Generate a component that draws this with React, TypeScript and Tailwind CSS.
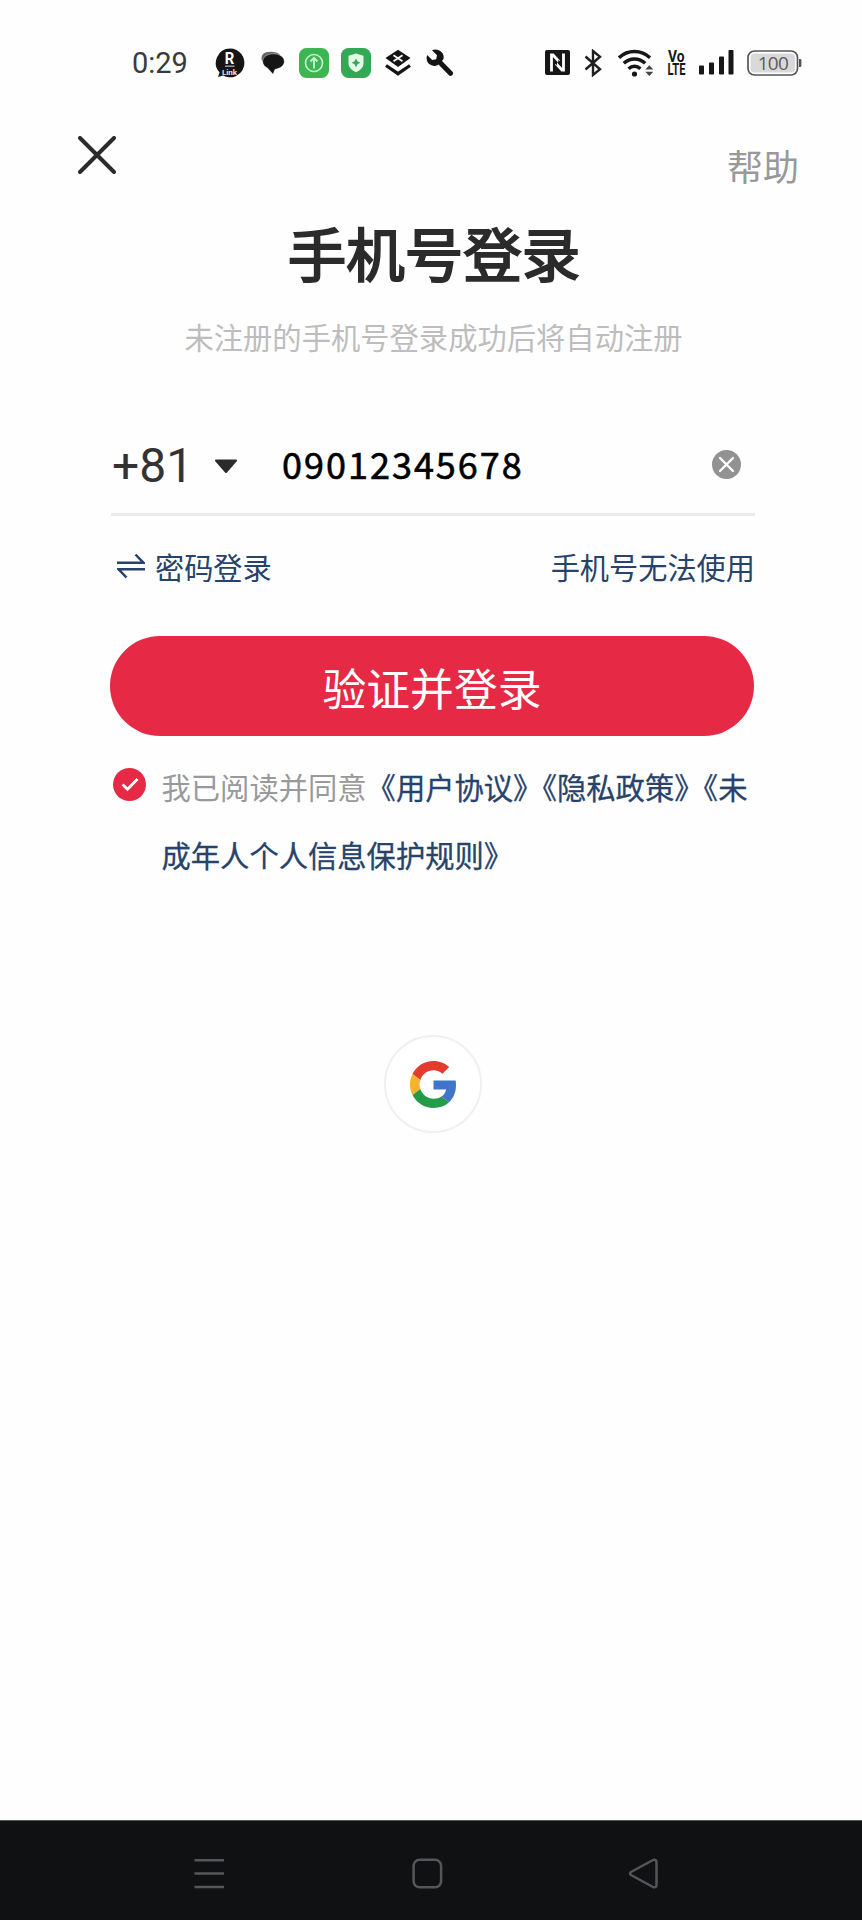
import React from "react";

const CJK = "font-['Noto_Sans_CJK_SC',sans-serif]";

function LinkBubbleIcon() {
  return (
    <svg className="h-[30px] w-[30px]" viewBox="0 0 30 30">
      <path d="M15 .5a14.4 14.4 0 1 1-7 27L3 29l1.600-4.400A14.4 14.4 0 0 1 15 .5z" fill="#151515" />
      <text x="14.500" y="16" textAnchor="middle" fontFamily="Roboto, sans-serif" fontWeight="700" fontSize="17" textLength="9.500" lengthAdjust="spacingAndGlyphs" fill="#fff">R</text>
      <path d="M10 18.200h9.500" stroke="#bbb" strokeWidth="1.200" />
      <text x="14.500" y="26.500" textAnchor="middle" fontFamily="Roboto, sans-serif" fontWeight="700" fontSize="8" fill="#e4e4e4">Link</text>
    </svg>
  );
}

function ChatIcon() {
  return (
    <svg className="h-[24px] w-[25px]" viewBox="0 0 25 24">
      <path d="M2 10C0 4 4 .8 10.500 .8c4.500 0 7.500 1 9.500 3z" fill="#666" />
      <path d="M13.500 2.800c6 0 10.800 3.200 10.800 7.700 0 3.900-4.200 7.300-9.300 7.700L13 23.200 7.500 17C4.500 15.800 2.700 13.300 2.700 10.500c0-4.500 4.800-7.700 10.800-7.700z" fill="#151515" stroke="#fff" strokeWidth=".4" />
    </svg>
  );
}

function UploadTile() {
  return (
    <svg className="h-[30px] w-[30px]" viewBox="0 0 30 30">
      <rect width="30" height="30" rx="7.500" fill="#3cb653" />
      <g fill="none" stroke="#c9f0cd" strokeWidth="1.600">
        <circle cx="15" cy="15" r="8.500" />
        <path d="M15 20.500v-10M11.500 13.500l3.500-3.500 3.500 3.500" strokeWidth="2" />
      </g>
    </svg>
  );
}

function ShieldTile() {
  return (
    <svg className="h-[30px] w-[30px]" viewBox="0 0 30 30">
      <rect width="30" height="30" rx="7.500" fill="#33a955" />
      <path d="M15 5.500l7.500 2.300v7.500c0 4.500-3.500 7.200-7.500 9-4-1.800-7.500-4.500-7.500-9V7.800z" fill="#e3f7e6" />
      <path d="M15 10.500l1.500 2.800 2.800 1.500-2.800 1.500L15 19.200l-1.500-2.900-2.800-1.500 2.800-1.500z" fill="#33a955" />
    </svg>
  );
}

function LayersIcon() {
  return (
    <svg className="h-[28px] w-[28px]" viewBox="0 0 28 28">
      <path d="M14 .8L26.500 9 14 18 1.500 9z" fill="#151515" />
      <path d="M9.500 6.200l9 6M18.500 6.200l-9 6" stroke="#fff" strokeWidth="1.700" />
      <path d="M2 16.500l12 8.200 12-8.200" fill="none" stroke="#151515" strokeWidth="3.300" />
    </svg>
  );
}

function WrenchIcon() {
  return (
    <svg className="h-[28px] w-[28px]" viewBox="0 0 28 28">
      <path d="M14 13.500l10.500 10.800" stroke="#151515" strokeWidth="5" strokeLinecap="round" />
      <path d="M6 1.200l5 5-.8 4-4 .8-5-5C-.2 9.800 1 13.500 4 15.600c2.500 1.700 5.500 1.500 7.500.6l5.800-5.800c.8-2.600.3-5.200-1.600-7.200C13 .500 9.500 0 6 1.200z" fill="#151515" />
    </svg>
  );
}

function NfcIcon() {
  return (
    <svg className="h-[25px] w-[25px]" viewBox="0 0 25 25">
      <rect width="25" height="25" rx="2" fill="#171717" />
      <g fill="none" stroke="#fff" strokeWidth="2.800">
        <path d="M6.500 21.500V5H8l6 6.500" />
        <path d="M18.500 3.500V20H17l-6-6.500" />
      </g>
      <path d="M9.300 9.200l2.700 2.700v3.500l-2.700-2.700zM13.300 9.800l2.700 2.700v3.500l-2.700-2.700z" fill="#171717" />
    </svg>
  );
}

function BluetoothIcon() {
  return (
    <svg className="h-[28px] w-[18px]" viewBox="0 0 18 28" fill="none" stroke="#1f1f1f" strokeWidth="2.400">
      <path d="M1.500 7.500L16 20.300 9 26V2l7 5.700L1.500 20.500" />
    </svg>
  );
}

function WifiIcon() {
  return (
    <svg className="h-[28px] w-[36px]" viewBox="0 0 36 28">
      <g fill="none" stroke="#171717" strokeWidth="3.400">
        <path d="M1 8.700a22.500 22.500 0 0 1 31 0" />
        <path d="M5.800 14.300a15.500 15.500 0 0 1 21.400 0" />
        <path d="M10.600 19.700a8.500 8.500 0 0 1 11.800 0" />
      </g>
      <circle cx="16.500" cy="25" r="2.600" fill="#171717" />
      <path d="M27.300 20.500l4-4.300 4 4.300zM27.300 22.800l4 4.300 4-4.300z" fill="#444" />
    </svg>
  );
}

function VolteIcon() {
  return (
    <svg className="h-[26px] w-[19px] overflow-visible" viewBox="0 0 19 26" fontFamily="Roboto, sans-serif" fontWeight="700" fill="#171717">
      <text x="1" y="12" fontSize="16" textLength="16.500" lengthAdjust="spacingAndGlyphs">Vo</text>
      <text x="0.500" y="25.300" fontSize="16.500" textLength="18" lengthAdjust="spacingAndGlyphs">LTE</text>
    </svg>
  );
}

function SignalIcon() {
  return (
    <svg className="h-[25px] w-[35px]" viewBox="0 0 35 25" fill="#171717">
      <rect x="0" y="15.500" width="5" height="9" rx=".8" />
      <rect x="10" y="12.500" width="5" height="12" rx=".8" />
      <rect x="20" y="6.500" width="5" height="18" rx=".8" />
      <rect x="29.500" y="0" width="5" height="24.500" rx=".8" />
    </svg>
  );
}

function BatteryIcon() {
  return (
    <svg className="h-[26px] w-[55px]" viewBox="0 0 55 26">
      <rect x="1" y="1" width="49.500" height="24" rx="6.500" fill="#fff" stroke="#555" strokeWidth="1.700" />
      <rect x="3.500" y="3.500" width="44.500" height="19" rx="4" fill="#d9d9d9" />
      <path d="M52 9h1.200a1.200 1.200 0 0 1 1.200 1.200v5.600a1.200 1.200 0 0 1-1.200 1.200H52z" fill="#555" />
      <text x="26.300" y="20" textAnchor="middle" fontFamily="'Open Sans', sans-serif" fontSize="19" textLength="31" fill="#5c5c5c">100</text>
    </svg>
  );
}

function StatusBar() {
  return (
    <div className="flex h-[125px] items-center justify-between pr-[60px] pl-[131px]">
      <div className="flex items-center">
        <span className="w-[84px] pt-px pl-px font-['Roboto',sans-serif] text-[29px] leading-none text-[#3a3a3a]">0:29</span>
        <LinkBubbleIcon />
        <span className="ml-[15px] flex"><ChatIcon /></span>
        <span className="ml-[14px] flex"><UploadTile /></span>
        <span className="ml-[12px] flex"><ShieldTile /></span>
        <span className="ml-[13px] flex"><LayersIcon /></span>
        <span className="ml-[14px] flex"><WrenchIcon /></span>
      </div>
      <div className="flex items-center">
        <NfcIcon />
        <span className="ml-[14px] flex"><BluetoothIcon /></span>
        <span className="ml-[16px] flex"><WifiIcon /></span>
        <span className="ml-[13px] flex"><VolteIcon /></span>
        <span className="ml-[13px] flex"><SignalIcon /></span>
        <span className="ml-[13px] flex"><BatteryIcon /></span>
      </div>
    </div>
  );
}

function GoogleLogo() {
  return (
    <svg className="h-[47px] w-[47px]" viewBox="0 0 48 48">
      <path fill="#e33b2e" d="M24 9.500c3.540 0 6.710 1.220 9.210 3.600l6.850-6.850C35.900 2.380 30.470 0 24 0 14.620 0 6.510 5.380 2.560 13.220l7.980 6.190C12.430 13.720 17.740 9.500 24 9.500z" />
      <path fill="#3f76cc" d="M46.980 24.550c0-1.570-.15-3.090-.38-4.550H24v9.020h12.940c-.58 2.960-2.260 5.480-4.780 7.180l7.730 6c4.510-4.180 7.090-10.360 7.090-17.650z" />
      <path fill="#f5b32e" d="M10.530 28.590c-.48-1.450-.76-2.990-.76-4.590s.27-3.140.76-4.590l-7.980-6.190C.92 16.460 0 20.120 0 24c0 3.880.92 7.540 2.560 10.780l7.970-6.190z" />
      <path fill="#259a48" d="M24 48c6.480 0 11.930-2.130 15.890-5.810l-7.730-6c-2.150 1.450-4.920 2.300-8.160 2.300-6.260 0-11.570-4.220-13.470-9.910l-7.980 6.190C6.510 42.620 14.620 48 24 48z" />
    </svg>
  );
}

function LoginForm() {
  return (
    <main className="mr-[107px] ml-[111px] flex flex-col">
      <div className="mt-[46px] flex h-[100px] items-center border-b-3 border-[#ebebeb]">
        <span className="w-[103px] pt-[3px] pl-px font-['Roboto',sans-serif] text-[48px] leading-none text-[#333]">+81</span>
        <svg className="mt-[3px] h-[15px] w-[24px]" viewBox="0 0 24 15">
          <path d="M2 1.500h20L12 13z" fill="#2b2b2b" stroke="#2b2b2b" strokeWidth="2" strokeLinejoin="round" />
        </svg>
        <span className="ml-[44px] pb-[3px] text-[36px] leading-none tracking-[2px] text-black [-webkit-text-stroke:0.6px_#000]">09012345678</span>
        <button className="mr-[14px] ml-auto" aria-label="清除">
          <svg className="h-[29px] w-[29px]" viewBox="0 0 29 29">
            <circle cx="14.500" cy="14.500" r="14.500" fill="#929292" />
            <path d="M8 8l13 13M21 8L8 21" stroke="#fff" strokeWidth="2.300" strokeLinecap="round" />
          </svg>
        </button>
      </div>

      <div className="flex h-[100px] items-center justify-between pt-px text-[29.200px] text-[#27436b]">
        <button className="flex items-center">
          <svg className="mb-px ml-[6px] h-[26px] w-[28px]" viewBox="0 0 28 26" fill="none" stroke="#27436b" strokeWidth="2.500">
            <path d="M0 9.800h26.500L18.500 1.500M28 16.200H1.500l8 8.300" />
          </svg>
          <span className="ml-[10px]">密码登录</span>
        </button>
        <button>手机号无法使用</button>
      </div>

      <button className="mt-5 mr-px -ml-px h-[100px] rounded-full bg-[#e62945] text-[43.800px] leading-[102px] text-white">
        验证并登录
      </button>

      <div className="mt-[17px] flex">
        <svg className="mt-[15px] ml-[2px] h-[33px] w-[33px] shrink-0" viewBox="0 0 33 33">
          <circle cx="16.500" cy="16.500" r="16.500" fill="#e62945" />
          <path d="M9.500 16.500l5 4.800 10-10.300" fill="none" stroke="#fff" strokeWidth="2.800" />
        </svg>
        <p className="ml-[15.500px] text-[29.300px] leading-[67.500px] whitespace-nowrap text-[#27436b] [-webkit-text-stroke:0.3px_#27436b]">
          <span className="text-[#999] [-webkit-text-stroke:0px]">我已阅读并同意</span>《用户协议》《隐私政策》《未<br />
          成年人个人信息保护规则》
        </p>
      </div>
    </main>
  );
}

function NavBar() {
  return (
    <nav className="mt-auto flex h-[100px] items-center justify-between border-t border-[#555857] bg-[#101113] pt-[6px] pr-[203px] pl-[194px]">
      <svg className="h-[31px] w-[31px]" viewBox="0 0 31 31" stroke="#54575a" strokeWidth="2.500">
        <path d="M.5 2.200h29.500M.5 15.500h29.500M.5 28.900h29.500" />
      </svg>
      <svg className="ml-px h-[31px] w-[31px]" viewBox="0 0 31 31" fill="none" stroke="#54575a" strokeWidth="2.500">
        <rect x="1.600" y="1.800" width="27.500" height="27.500" rx="6" />
      </svg>
      <svg className="h-[31px] w-[31px]" viewBox="0 0 31 31" fill="none" stroke="#54575a" strokeWidth="2.500" strokeLinejoin="round">
        <path d="M25 2L3 14Q1 15.500 3 17L25 29Q28.500 30 28.500 27V4.500Q28.500 1 25 2z" />
      </svg>
    </nav>
  );
}

export default function App() {
  return (
    <div className={`flex h-[1920px] w-[862px] flex-col overflow-hidden bg-[#fefefe] ${CJK}`}>
      <StatusBar />
      <header className="flex h-[75px] items-start justify-between pr-[63px] pl-[78px]">
        <button className="mt-[11px]" aria-label="关闭">
          <svg className="h-[38px] w-[38px]" viewBox="0 0 38 38" stroke="#2b2b2b" strokeWidth="4" strokeLinecap="round">
            <path d="M2 2l34 34M36 2L2 36" />
          </svg>
        </button>
        <button className="mt-[5px] text-[36px] leading-[70px] text-[#999]">帮助</button>
      </header>
      <h1 className="pt-px pl-[6px] text-center text-[58.500px] leading-[101px] font-normal text-[#2b2b2b] [-webkit-text-stroke:2px_#2b2b2b]">手机号登录</h1>
      <p className="pl-[5px] text-center text-[29.300px] leading-[68px] text-[#bdbdbd]">未注册的手机号登录成功后将自动注册</p>
      <LoginForm />
      <button className="mt-[147px] ml-[384px] flex h-[98px] w-[98px] shrink-0 items-center justify-center rounded-full border-2 border-[#f0f0f0] bg-white" aria-label="Google">
        <GoogleLogo />
      </button>
      <NavBar />
    </div>
  );
}
